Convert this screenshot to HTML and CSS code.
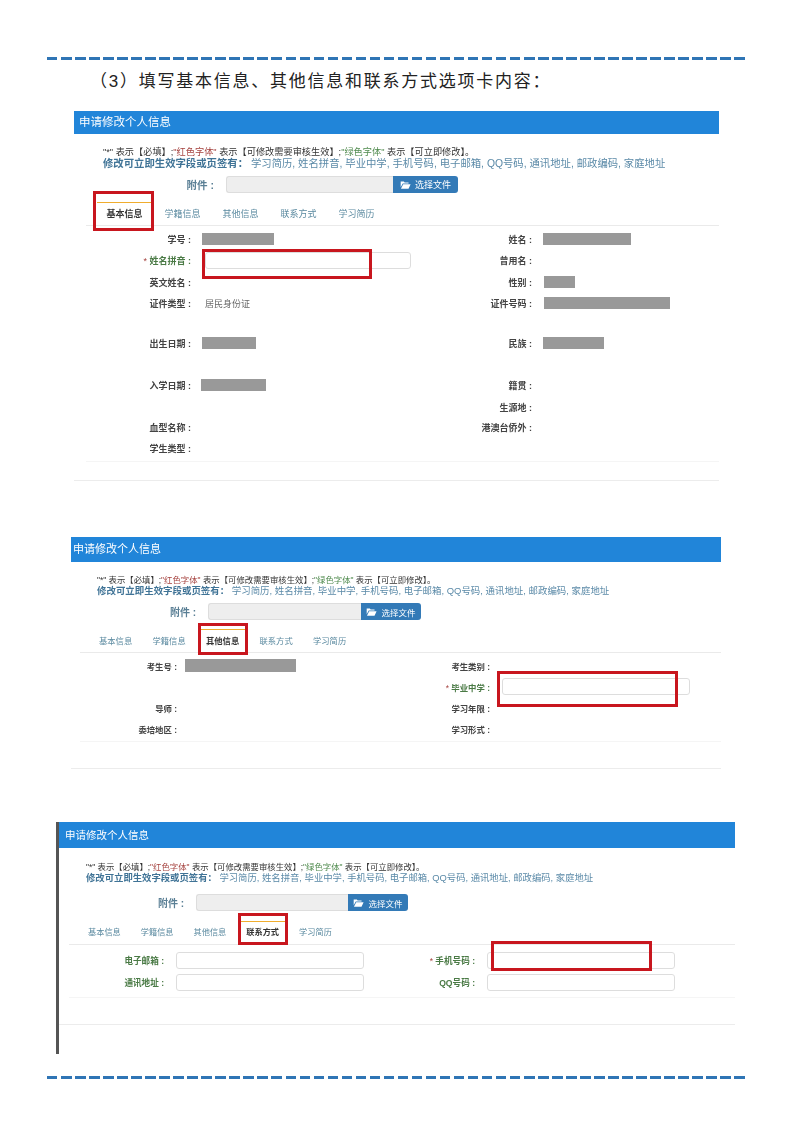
FILE: index.html
```html
<!DOCTYPE html>
<html lang="zh-CN">
<head>
    <meta charset="UTF-8">
    <meta name="viewport" content="width=device-width, initial-scale=1.0">
    <title>申请修改个人信息</title>
    <link rel="stylesheet" href="styles.css">
</head>
<body>
    <div class="sheet">
        <div class="rule"></div>
        <h1 class="step-title">（3）填写基本信息、其他信息和联系方式选项卡内容：</h1>

        <!-- basic info tab -->
        <section class="panel panel-basic">
            <div class="panel-head">申请修改个人信息</div>
            <div class="panel-top">
                <p class="note note-first">"*" 表示【必填】;<span class="red">"红色字体"</span> 表示【可修改需要审核生效】;<span class="green">"绿色字体"</span> 表示【可立即修改】。</p>
                <p class="note note-blue"><strong>修改可立即生效字段或页签有：</strong> 学习简历, 姓名拼音, 毕业中学, 手机号码, 电子邮箱, QQ号码, 通讯地址, 邮政编码, 家庭地址</p>
                <div class="attach">
                    <span class="attach-label">附件 :</span>
                    <span class="attach-input"></span>
                    <span class="attach-btn">
                        <svg class="folder" viewBox="0 0 16 13"><path d="M1 2.2h4.6l1.2 1.4h5.6v1.6H4L1 10.5z"/><path d="M4.6 6H15.4l-3 6.6H1.4z"/></svg>
                        选择文件
                    </span>
                </div>
            </div>
            <div class="panel-main">
                <div class="tabs">
                    <span class="tab tab-active">基本信息<i class="red-box"></i></span>
                    <span class="tab">学籍信息</span>
                    <span class="tab">其他信息</span>
                    <span class="tab">联系方式</span>
                    <span class="tab">学习简历</span>
                </div>
                <div class="form">
                    <span class="label">学号 :</span><span class="value"><i class="mask mask-a"></i></span>
                    <span class="label">姓名 :</span><span class="value"><i class="mask mask-b"></i></span>

                    <span class="label label-green"><em>*</em> 姓名拼音 :</span>
                    <span class="value"><span class="input input-name"><i class="red-box"></i></span></span>
                    <span class="label">曾用名 :</span><span class="value"></span>

                    <span class="label">英文姓名 :</span><span class="value"></span>
                    <span class="label">性别 :</span><span class="value"><i class="mask mask-c"></i></span>

                    <span class="label">证件类型 :</span><span class="value value-text">居民身份证</span>
                    <span class="label">证件号码 :</span><span class="value"><i class="mask mask-d"></i></span>

                    <span class="label">出生日期 :</span><span class="value"><i class="mask mask-e"></i></span>
                    <span class="label">民族 :</span><span class="value"><i class="mask mask-f"></i></span>

                    <span class="label">入学日期 :</span><span class="value"><i class="mask mask-g"></i></span>
                    <span class="label">籍贯 :</span><span class="value"></span>

                    <span class="label"></span><span class="value"></span>
                    <span class="label">生源地 :</span><span class="value"></span>

                    <span class="label">血型名称 :</span><span class="value"></span>
                    <span class="label">港澳台侨外 :</span><span class="value"></span>

                    <span class="label">学生类型 :</span><span class="value"></span>
                    <span class="label"></span><span class="value"></span>
                </div>
            </div>
            <div class="panel-foot"></div>
        </section>

        <!-- other info tab -->
        <section class="panel panel-other">
            <div class="panel-head">申请修改个人信息</div>
            <div class="panel-top">
                <p class="note note-first">"*" 表示【必填】;<span class="red">"红色字体"</span> 表示【可修改需要审核生效】;<span class="green">"绿色字体"</span> 表示【可立即修改】。</p>
                <p class="note note-blue"><strong>修改可立即生效字段或页签有：</strong> 学习简历, 姓名拼音, 毕业中学, 手机号码, 电子邮箱, QQ号码, 通讯地址, 邮政编码, 家庭地址</p>
                <div class="attach">
                    <span class="attach-label">附件 :</span>
                    <span class="attach-input"></span>
                    <span class="attach-btn">
                        <svg class="folder" viewBox="0 0 16 13"><path d="M1 2.2h4.6l1.2 1.4h5.6v1.6H4L1 10.5z"/><path d="M4.6 6H15.4l-3 6.6H1.4z"/></svg>
                        选择文件
                    </span>
                </div>
            </div>
            <div class="panel-main">
                <div class="tabs">
                    <span class="tab">基本信息</span>
                    <span class="tab">学籍信息</span>
                    <span class="tab tab-active">其他信息<i class="red-box"></i></span>
                    <span class="tab">联系方式</span>
                    <span class="tab">学习简历</span>
                </div>
                <div class="form">
                    <span class="label">考生号 :</span><span class="value"><i class="mask mask-h"></i></span>
                    <span class="label">考生类别 :</span><span class="value"></span>

                    <span class="label"></span><span class="value"></span>
                    <span class="label label-green"><em>*</em> 毕业中学 :</span>
                    <span class="value"><span class="input input-school"><i class="red-box"></i></span></span>

                    <span class="label">导师 :</span><span class="value"></span>
                    <span class="label">学习年限 :</span><span class="value"></span>

                    <span class="label">委培地区 :</span><span class="value"></span>
                    <span class="label">学习形式 :</span><span class="value"></span>
                </div>
            </div>
            <div class="panel-foot"></div>
        </section>

        <!-- contact tab -->
        <section class="panel panel-contact">
            <div class="panel-head">申请修改个人信息</div>
            <div class="panel-top">
                <p class="note note-first">"*" 表示【必填】;<span class="red">"红色字体"</span> 表示【可修改需要审核生效】;<span class="green">"绿色字体"</span> 表示【可立即修改】。</p>
                <p class="note note-blue"><strong>修改可立即生效字段或页签有：</strong> 学习简历, 姓名拼音, 毕业中学, 手机号码, 电子邮箱, QQ号码, 通讯地址, 邮政编码, 家庭地址</p>
                <div class="attach">
                    <span class="attach-label">附件 :</span>
                    <span class="attach-input"></span>
                    <span class="attach-btn">
                        <svg class="folder" viewBox="0 0 16 13"><path d="M1 2.2h4.6l1.2 1.4h5.6v1.6H4L1 10.5z"/><path d="M4.6 6H15.4l-3 6.6H1.4z"/></svg>
                        选择文件
                    </span>
                </div>
            </div>
            <div class="panel-main">
                <div class="tabs">
                    <span class="tab">基本信息</span>
                    <span class="tab">学籍信息</span>
                    <span class="tab">其他信息</span>
                    <span class="tab tab-active">联系方式<i class="red-box"></i></span>
                    <span class="tab">学习简历</span>
                </div>
                <div class="form">
                    <span class="label label-green">电子邮箱 :</span>
                    <span class="value"><span class="input input-contact"></span></span>
                    <span class="label label-green"><em>*</em> 手机号码 :</span>
                    <span class="value"><span class="input input-contact"><i class="red-box"></i></span></span>

                    <span class="label label-green">通讯地址 :</span>
                    <span class="value"><span class="input input-contact"></span></span>
                    <span class="label label-green">QQ号码 :</span>
                    <span class="value"><span class="input input-contact"></span></span>
                </div>
            </div>
            <div class="panel-foot"></div>
        </section>

        <div class="rule rule-bottom"></div>
    </div>
</body>
</html>
```

FILE: styles.css
```css
body {
    margin: 0;
    background: white;
    color: #333;
    font-family: "Liberation Sans", "Noto Sans CJK SC", sans-serif;
}

.sheet {
    width: 793px;
    height: 1122px;
    padding: 57px 47px 0;
    box-sizing: border-box;
    overflow: hidden;
}

.rule {
    width: 699px;
    height: 3px;
    background: repeating-linear-gradient(90deg, #2f75b5 0, #2f75b5 10.5px, transparent 10.5px, transparent 14.03px);
}

.rule-bottom {
    margin-top: 22px;
}

.step-title {
    margin: 10px 0 17px 43px;
    font-size: 17px;
    line-height: 24px;
    font-weight: 400;
    letter-spacing: 1.75px;
    color: #222;
    white-space: nowrap;
}

/* panels */
.panel {
    --fs: 10.37px;
    --fs-first: 9.2px;
    --label-pad: 11px;
    --attach-w: 123px;
    --attach-fs: 10.5px;
    filter: blur(0.35px);
}

.panel-basic {
    margin-left: 27px;
    width: 645px;
}

.panel-other {
    --fs: 9.45px;
    --fs-first: 8.4px;
    --label-pad: 8px;
    --attach-w: 111px;
    --attach-fs: 10px;
    margin: 56px 0 0 24px;
    width: 650px;
}

.panel-contact {
    --fs: 9.35px;
    --fs-first: 8.4px;
    --label-pad: 12px;
    --attach-w: 110px;
    --attach-fs: 10px;
    margin: 53px 0 0 9px;
    width: 679px;
    box-sizing: border-box;
    border-left: 3px solid #555;
    padding-bottom: 29px;
}

.panel-head {
    height: 23px;
    line-height: 23px;
    padding-left: 5px;
    background: #2185d9;
    color: white;
    font-size: 11.5px;
}

.panel-other .panel-head {
    height: 25px;
    line-height: 25px;
    padding-left: 2px;
    font-size: 11px;
}

.panel-contact .panel-head {
    height: 26px;
    line-height: 26px;
    padding-left: 6px;
    font-size: 10.5px;
}

.panel-top {
    padding: 13px 0 0 29px;
}

.panel-other .panel-top {
    padding: 13px 0 0 26px;
}

.panel-contact .panel-top {
    padding: 14px 0 0 27px;
}

.note {
    margin: 0;
    font-size: var(--fs);
    line-height: 11px;
    color: #444;
    white-space: nowrap;
}

.note-first {
    font-size: var(--fs-first);
    color: #333;
}

.panel-other .note {
    line-height: 10.5px;
}

.note-blue {
    color: #5b8aa8;
}

.note-blue strong {
    color: #3f7396;
}

.red {
    color: #a5423f;
}

.green {
    color: #4f8a4d;
}

.attach {
    display: flex;
    align-items: center;
    margin-top: 7px;
}

.panel-contact .attach {
    margin-top: 10px;
}

.attach-label {
    width: var(--attach-w);
    padding-right: 12px;
    box-sizing: border-box;
    text-align: right;
    font-size: var(--attach-fs);
    font-weight: bold;
    color: #5a7f95;
}

.attach-input {
    width: 167px;
    height: 17px;
    box-sizing: border-box;
    background: #eee;
    border: 1px solid #ddd;
    border-right: 0;
    border-radius: 3px 0 0 3px;
}

.panel-other .attach-input {
    width: 153px;
}

.panel-contact .attach-input {
    width: 152px;
}

.attach-btn {
    display: flex;
    align-items: center;
    justify-content: center;
    gap: 4px;
    width: 65px;
    height: 17px;
    background: #337ab7;
    border-radius: 0 3px 3px 0;
    color: white;
    font-size: 9px;
}

.panel-other .attach-btn,
.panel-contact .attach-btn {
    width: 60px;
    font-size: 8.5px;
}

.folder {
    width: 11px;
    height: 9px;
    fill: white;
}

/* tabs and form */
.panel-main {
    margin-left: 12px;
    padding-bottom: 2px;
    border-bottom: 1px solid #f5f5f5;
}

.panel-other .panel-main {
    margin-left: 9px;
}

.panel-contact .panel-main {
    margin-left: 10px;
    padding-bottom: 4px;
}

.tabs {
    display: flex;
    gap: 3px;
    height: 23px;
    margin-top: 9px;
    padding-left: 11px;
    border-bottom: 1px solid #eaeaea;
}

.panel-other .tabs {
    gap: 8.3px;
    padding-left: 13px;
}

.panel-contact .tabs {
    gap: 8px;
    height: 23px;
    margin-top: 10px;
    padding-left: 13px;
}

.tab {
    position: relative;
    padding: 0 9.5px;
    border-top: 1.5px solid transparent;
    line-height: 22px;
    font-size: 9px;
    color: #5b8aa0;
    white-space: nowrap;
}

.panel-other .tab {
    padding: 0 6px;
    font-size: 8.3px;
}

.panel-contact .tab {
    padding: 0 6px;
    font-size: 8.2px;
}

.tab-active {
    border-top-color: #f0ad2e;
    color: #333;
    font-weight: bold;
}

/* red callouts painted on the screenshot */
.red-box {
    position: absolute;
    box-sizing: border-box;
    border: 3px solid #c8161e;
}

.tab .red-box {
    left: -4px;
    right: -2px;
    top: -12px;
    height: 40px;
}

.panel-other .tab .red-box {
    left: -2px;
    right: -3px;
    top: -7px;
    height: 32px;
}

.panel-contact .tab .red-box {
    left: -2px;
    right: -3px;
    top: -9px;
    height: 32px;
}

.input-name .red-box {
    left: -4px;
    top: -4px;
    width: 170px;
    height: 30px;
}

.input-school .red-box {
    left: -6px;
    top: -8px;
    width: 181px;
    height: 36px;
}

.input-contact .red-box {
    left: 3px;
    top: -12px;
    width: 161px;
    height: 30px;
}

.form {
    display: grid;
    grid-template-columns: 116px 216px 125px 1fr;
    grid-template-rows: 22px 21px 22px 20px 60px 24px 20px 21px 21px;
    align-items: center;
    padding-top: 2px;
}

.panel-other .form {
    grid-template-columns: 105px 212px 101px 1fr;
    grid-template-rows: repeat(4, 21px);
}

.panel-contact .form {
    grid-template-columns: 107px 210px 101px 1fr;
    grid-template-rows: 22px 22px;
    padding-top: 4px;
}

.label {
    padding-right: var(--label-pad);
    text-align: right;
    font-size: 9px;
    font-weight: bold;
    color: #444;
    white-space: nowrap;
}

.panel-other .label {
    font-size: 8.4px;
}

.panel-contact .label {
    font-size: 8.6px;
}

.label-green {
    color: #4a7a45;
}

.label-green em {
    color: #a5423f;
    font-style: normal;
    font-weight: normal;
}

.value {
    display: flex;
    align-items: center;
    min-height: 0;
}

.value-text {
    padding-left: 3px;
    font-size: 9px;
    color: #666;
}

.input {
    position: relative;
    display: block;
    height: 17px;
    box-sizing: border-box;
    background: white;
    border: 1px solid #ddd;
    border-radius: 3px;
}

.input-name {
    width: 206px;
    margin-left: 3px;
}

.input-school {
    width: 188px;
    margin-left: 4px;
}

.input-contact {
    width: 188px;
}

.mask {
    display: block;
    height: 12px;
    background: #999;
}

.mask-a { width: 72px; }
.mask-b { width: 88px; }
.mask-c { width: 31px; margin-left: 1px; }
.mask-d { width: 126px; margin-left: 1px; }
.mask-e { width: 54px; }
.mask-f { width: 61px; }
.mask-g { width: 65px; margin-left: -1px; }
.mask-h { width: 111px; height: 13px; }

.panel-foot {
    height: 1px;
    margin-top: 18px;
    background: #ececec;
}

.panel-other .panel-foot {
    margin-top: 26px;
}

.panel-contact .panel-foot {
    margin-top: 26px;
}
```
